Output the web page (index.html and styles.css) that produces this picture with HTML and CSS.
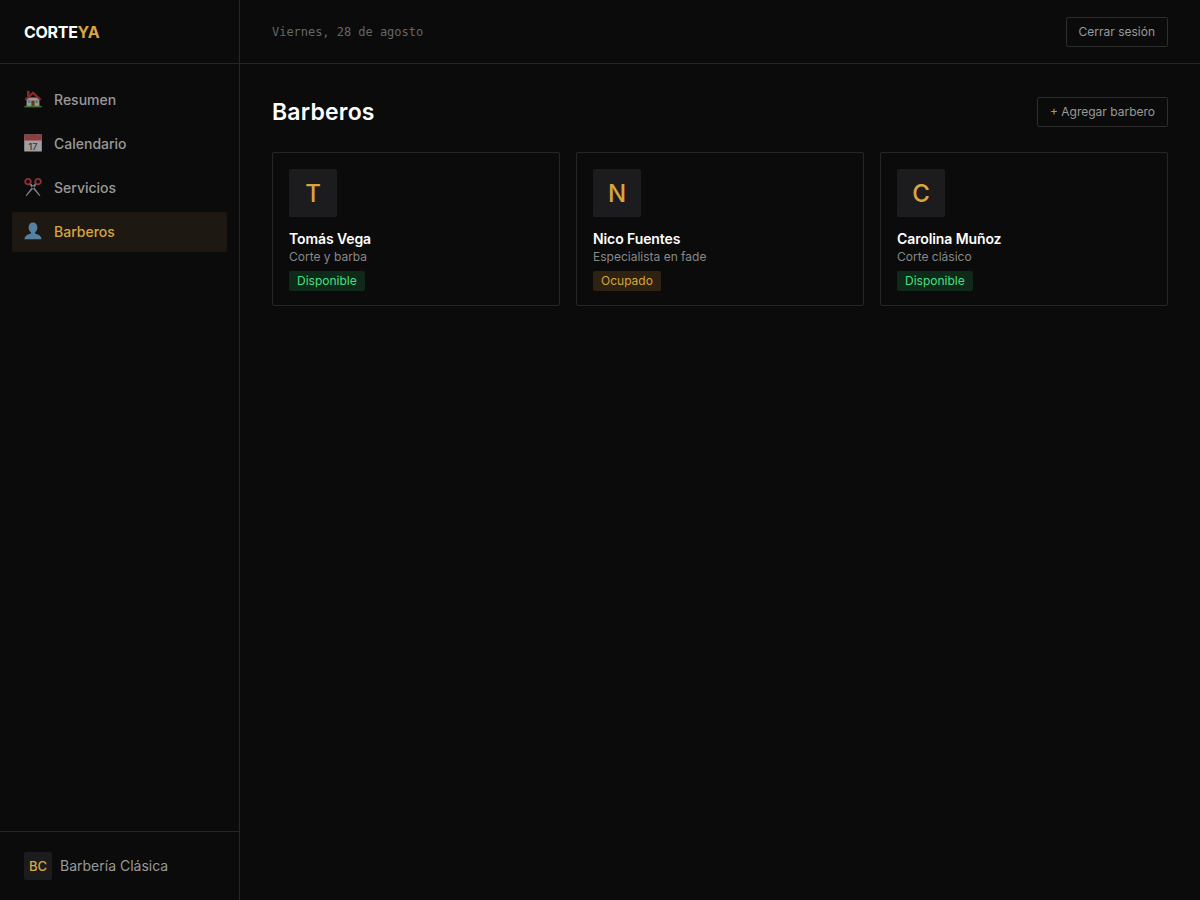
FILE: index.html
```html
<!DOCTYPE html>
<html lang="es">

<head>
  <meta charset="UTF-8">
  <meta name="viewport" content="width=device-width, initial-scale=1.0">
  <title>CorteYa</title>
  <link rel="stylesheet" href="styles.css">
</head>

<body>
  <div class="app">
    <aside class="sidebar">
      <div class="logo">CORTE<span>YA</span></div>

      <nav class="nav">
        <a class="nav-item">
          <svg class="nav-icon" viewBox="0 0 18 18">
            <rect x="2.600" y="7.500" width="12.800" height="8.500" fill="#dcc8a4" />
            <path d="M0.400 9.200 9 1.200 17.600 9.200 15.800 10.400 9 4.400 2.200 10.400Z" fill="#b0343c" />
            <rect x="3" y="0.800" width="2.600" height="5.200" fill="#b0343c" />
            <rect x="7.400" y="10.600" width="3.200" height="5.400" fill="#7a4c32" />
            <rect x="3.800" y="10.200" width="2.800" height="2.800" fill="#63a6cf" />
            <rect x="11.400" y="10.200" width="2.800" height="2.800" fill="#63a6cf" />
            <rect x="0.400" y="15.800" width="17.200" height="1.600" fill="#55963f" />
          </svg>
          Resumen
        </a>
        <a class="nav-item">
          <svg class="nav-icon" viewBox="0 0 18 18">
            <rect x="0.200" y="0.500" width="17.600" height="17" fill="#d2d2d6" />
            <rect x="0.200" y="0.500" width="17.600" height="6" fill="#bd4c50" />
            <rect x="3.500" y="0" width="1.500" height="2.500" fill="#7a7a80" />
            <rect x="13" y="0" width="1.500" height="2.500" fill="#7a7a80" />
            <text class="cal-num" x="9" y="16" text-anchor="middle">17</text>
          </svg>
          Calendario
        </a>
        <a class="nav-item">
          <svg class="nav-icon" viewBox="0 0 18 18" fill="none">
            <path d="M5.200 6.600 7.400 5.800 16.400 17.400 15.400 18ZM12.800 6.600 10.600 5.800 1.600 17.400 2.600 18Z" fill="#a0acb9" />
            <circle cx="4" cy="3.600" r="2.800" stroke="#bd3f47" stroke-width="1.800" />
            <circle cx="14" cy="3.600" r="2.800" stroke="#bd3f47" stroke-width="1.800" />
          </svg>
          Servicios
        </a>
        <a class="nav-item active">
          <svg class="nav-icon" viewBox="0 0 18 18">
            <path d="M9 .6c2.800 0 4.400 2.100 4.400 4.800 0 2.100-1 3.800-2.300 4.700v1.300c2 .9 6 1.500 6.500 5.800H.4c.5-4.300 4.500-4.900 6.500-5.800v-1.300C5.600 9.200 4.600 7.500 4.600 5.400 4.600 2.700 6.200.6 9 .6Z" fill="#6ba4d2" />
          </svg>
          Barberos
        </a>
      </nav>

      <div class="shop">
        <div class="shop-badge">BC</div>
        <span class="shop-name">Barbería Clásica</span>
      </div>
    </aside>

    <div class="content">
      <header class="topbar">
        <span class="date">Viernes, 28 de agosto</span>
        <button class="btn">Cerrar sesión</button>
      </header>

      <main class="main">
        <div class="page-head">
          <h1>Barberos</h1>
          <button class="btn">+ Agregar barbero</button>
        </div>

        <div class="cards">
          <div class="card">
            <div class="avatar">T</div>
            <div class="name">Tomás Vega</div>
            <div class="role">Corte y barba</div>
            <span class="tag free">Disponible</span>
          </div>
          <div class="card">
            <div class="avatar">N</div>
            <div class="name">Nico Fuentes</div>
            <div class="role">Especialista en fade</div>
            <span class="tag busy">Ocupado</span>
          </div>
          <div class="card">
            <div class="avatar">C</div>
            <div class="name">Carolina Muñoz</div>
            <div class="role">Corte clásico</div>
            <span class="tag free">Disponible</span>
          </div>
        </div>
      </main>
    </div>
  </div>
</body>

</html>
```
FILE: styles.css
```css
* {
  margin: 0;
  padding: 0;
  box-sizing: border-box;
}

body {
  background: #0b0b0b;
  font-family: Inter, "Liberation Sans", sans-serif;
  color: #fff;
}

.app {
  display: flex;
  width: 100%;
  height: 100vh;
  overflow: hidden;
}

.sidebar {
  width: 240px;
  flex-shrink: 0;
  display: flex;
  flex-direction: column;
  border-right: 1px solid #262626;
}

.logo {
  height: 64px;
  padding: 0 24px;
  display: flex;
  align-items: center;
  border-bottom: 1px solid #262626;
  font-size: 16px;
  font-weight: 700;
  letter-spacing: -0.3px;
}

.logo span {
  color: #d9a441;
}

.nav {
  flex: 1;
  padding: 16px 12px;
  display: flex;
  flex-direction: column;
  gap: 4px;
}

.nav-item {
  height: 40px;
  padding: 0 12px 2px;
  display: flex;
  align-items: center;
  gap: 12px;
  border-radius: 2px;
  font-size: 14px;
  font-weight: 500;
  color: #999;
}

.nav-item.active {
  background: #1d1912;
  color: #d9a441;
}

.nav-icon {
  width: 18px;
  height: 18px;
  flex-shrink: 0;
  opacity: 0.75;
  overflow: visible;
}

.cal-num {
  font-family: Inter, sans-serif;
  font-size: 9px;
  fill: #444;
}

.shop {
  padding: 20px 24px;
  display: flex;
  align-items: center;
  gap: 8px;
  border-top: 1px solid #262626;
}

.shop-badge {
  width: 28px;
  height: 28px;
  display: flex;
  align-items: center;
  justify-content: center;
  background: #1c1c1e;
  border-radius: 2px;
  font-size: 13px;
  font-weight: 500;
  color: #d9a441;
}

.shop-name {
  font-size: 14px;
  color: #999;
  margin-bottom: 2px;
}

.content {
  flex: 1;
  display: flex;
  flex-direction: column;
}

.topbar {
  height: 64px;
  padding: 1px 32px 0;
  display: flex;
  align-items: center;
  justify-content: space-between;
  border-bottom: 1px solid #262626;
}

.date {
  font-family: "DejaVu Sans Mono", monospace;
  font-size: 12px;
  letter-spacing: -0.03px;
  color: #666;
}

.btn {
  height: 30px;
  padding: 0 12px 1px;
  background: transparent;
  border: 1px solid #2e2e2e;
  border-radius: 2px;
  font-family: Inter, sans-serif;
  font-size: 12px;
  color: #999;
}

.main {
  padding: 33px 32px;
}

.page-head {
  display: flex;
  align-items: center;
  justify-content: space-between;
  margin-bottom: 25px;
}

.page-head h1 {
  font-family: Inter, sans-serif;
  font-size: 23px;
  font-weight: 600;
  letter-spacing: 0.2px;
}

.cards {
  display: grid;
  grid-template-columns: repeat(3, 1fr);
  gap: 16px;
}

.card {
  padding: 16px 16px 14px;
  border: 1px solid #262626;
  border-radius: 2px;
}

.avatar {
  width: 48px;
  height: 48px;
  display: flex;
  align-items: center;
  justify-content: center;
  background: #1c1c1e;
  border-radius: 2px;
  margin-bottom: 12px;
  font-size: 24px;
  font-weight: 500;
  color: #d9a441;
}

.name {
  font-size: 14px;
  font-weight: 600;
  line-height: 20px;
  letter-spacing: -0.1px;
}

.role {
  font-size: 12px;
  line-height: 16px;
  color: #888;
  margin-bottom: 6px;
}

.tag {
  display: block;
  width: fit-content;
  height: 20px;
  padding: 0 8px;
  border-radius: 2px;
  font-size: 12px;
  line-height: 20px;
}

.tag.free {
  background: #0f2a1a;
  color: #4ade80;
}

.tag.busy {
  background: #2e2212;
  color: #d9a441;
}
```
